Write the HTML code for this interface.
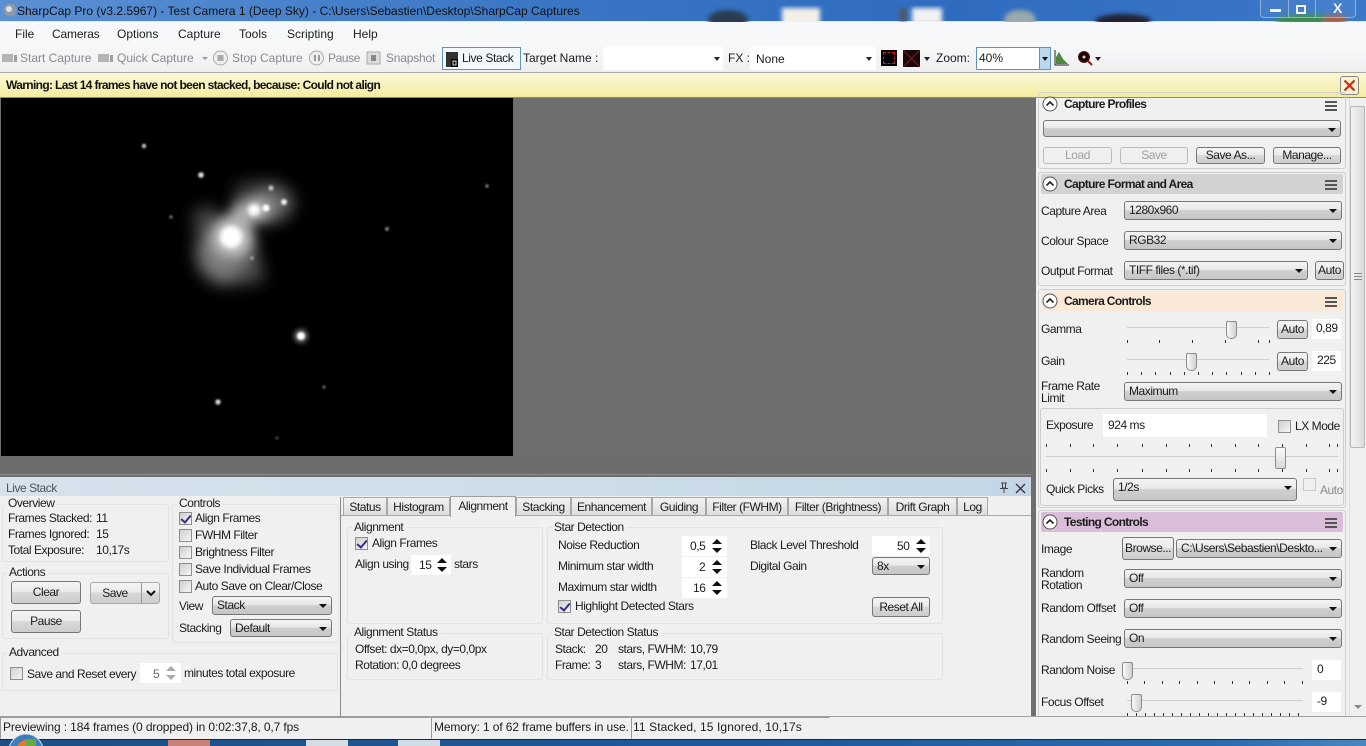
<!DOCTYPE html>
<html><head><meta charset="utf-8"><style>
html,body{margin:0;padding:0;width:1366px;height:746px;overflow:hidden;background:#f0f0f0}
#r{position:absolute;left:0;top:0;width:1366px;height:746px;overflow:hidden;font:12px "Liberation Sans",sans-serif;color:#1c1c1c;letter-spacing:-.45px}
#r div{position:absolute;box-sizing:border-box}
.t{white-space:nowrap;line-height:14px;height:14px}
#r .n{letter-spacing:0}
.g{color:#8a8a8a}
.b{font-weight:bold;letter-spacing:-.65px}
.c{border:1px solid #777;border-radius:3px;background:linear-gradient(#f4f4f4,#e8e8e8 45%,#cfcfcf 50%,#c6c6c6);white-space:nowrap;line-height:16px;padding-left:4px}
.c:after{content:"";position:absolute;right:4px;top:7px;border:4px solid transparent;border-top:4px solid #111;border-bottom:0}
.btn{border:1px solid #777;border-radius:3px;background:linear-gradient(#f4f4f4,#ececec 45%,#d8d8d8 50%,#cdcdcd);text-align:center;white-space:nowrap}
.dis{border-color:#bbb;background:#efefef;color:#a0a0a0}
.f{background:#fff;white-space:nowrap}
.gb{border:1px solid #e2e2e2;border-radius:3px}
.lb{background:#f0f0f0;padding:0 3px 0 2px}
.cb{width:13px;height:13px;border:1px solid #8e8e8e;background:linear-gradient(135deg,#cfcfcf,#f6f6f6)}
.cb.on:after{content:"";position:absolute;left:3px;top:0;width:4px;height:8px;border:solid #30308a;border-width:0 2px 2px 0;transform:rotate(40deg)}
.h{height:20px;border-radius:2px}
.sp{width:10px;height:14px}
.sp:before{content:"";position:absolute;left:0;top:0;border:5px solid transparent;border-bottom:5px solid #111;border-top:0}
.sp:after{content:"";position:absolute;left:0;bottom:0;border:5px solid transparent;border-top:5px solid #111;border-bottom:0}
.sp.lt:before{border-bottom-color:#aaa}.sp.lt:after{border-top-color:#aaa}
.tr{height:2px;background:#cfcfcf;border-bottom:1px solid #eee}
.th{width:11px;height:18px;border:1px solid #8c8c8c;border-radius:2px 2px 5px 5px;background:linear-gradient(90deg,#fafafa,#d0d0d0)}
.tk{width:1px;height:3px;background:#333}
.tab{height:19px;top:497px;border:1px solid #a8a8a8;border-bottom:0;background:linear-gradient(#f2f2f2,#dcdcdc);text-align:center;line-height:18px;white-space:nowrap}
#r .sb{height:22px;top:717px;border:1px solid #9a9a9a;border-right-color:#eee;border-bottom-color:#eee;line-height:18px;white-space:nowrap;padding-left:2px;letter-spacing:-.12px}
svg{position:absolute}
</style></head><body><div id="r">

<!-- title bar -->
<div style="left:0;top:0;width:1366px;height:22px;background:linear-gradient(90deg,#5b90d4,#3a76c4 40%,#2f6cc0 70%,#3b78c8);border-bottom:1px solid #dfe9f5"></div>
<svg style="left:0;top:0" width="1366" height="22"><defs><filter id="bl"><feGaussianBlur stdDeviation="2.5"/></filter></defs>
<g filter="url(#bl)"><ellipse cx="728" cy="20" rx="20" ry="10" fill="#2a3a50"/><rect x="782" y="8" width="38" height="18" fill="#f4f0e8"/><rect x="900" y="8" width="6" height="14" fill="#555"/><rect x="912" y="8" width="30" height="16" fill="#f2f2f2"/><ellipse cx="1020" cy="20" rx="16" ry="10" fill="#9aa"/><ellipse cx="1123" cy="21" rx="28" ry="7" fill="#223"/><ellipse cx="1305" cy="20" rx="30" ry="6" fill="#3a8a50"/><ellipse cx="1335" cy="20" rx="12" ry="5" fill="#a86040"/></g></svg>
<div style="left:1260px;top:-2px;width:96px;height:20px;border:1px solid #8fb0dc;border-radius:0 0 4px 4px;background:rgba(255,255,255,.06)"></div>
<div style="left:1288px;top:0;width:1px;height:18px;background:#8fb0dc"></div>
<div style="left:1315px;top:0;width:1px;height:18px;background:#8fb0dc"></div>
<div style="left:1270px;top:9px;width:11px;height:3px;background:#f2f2f2"></div>
<div style="left:1296px;top:5px;width:10px;height:9px;border:2px solid #f2f2f2"></div>
<div class="t n" style="left:1333px;top:1px;color:#f4f4f4;font-weight:bold;font-size:14px">X</div>
<svg style="left:3px;top:3px" width="14" height="14"><circle cx="7" cy="7" r="6.5" fill="#8a9aa8"/><circle cx="6" cy="6" r="3" fill="#dde"/></svg>
<div class="t n" style="left:17px;top:4px;color:#111">SharpCap Pro (v3.2.5967) - Test Camera 1 (Deep Sky) - C:\Users\Sebastien\Desktop\SharpCap Captures</div>

<!-- menu -->
<div style="left:0;top:22px;width:1366px;height:24px;background:#f7f8f9"></div>
<div class="t n" style="left:15px;top:27px">File</div>
<div class="t" style="left:52px;top:27px;letter-spacing:-.15px">Cameras</div>
<div class="t n" style="left:117px;top:27px">Options</div>
<div class="t n" style="left:178px;top:27px">Capture</div>
<div class="t n" style="left:239px;top:27px">Tools</div>
<div class="t n" style="left:287px;top:27px">Scripting</div>
<div class="t n" style="left:353px;top:27px">Help</div>

<!-- toolbar -->
<div style="left:0;top:46px;width:1366px;height:26px;background:linear-gradient(#f7f8f9,#efefef)"></div>
<svg style="left:2px;top:53px" width="16" height="10"><rect y="1" width="11" height="8" fill="#b4b4b4"/><rect x="12" y="2" width="3" height="7" fill="#a0a0a0"/></svg>
<div class="t g n" style="left:20px;top:51px">Start Capture</div>
<svg style="left:98px;top:53px" width="16" height="10"><rect y="1" width="11" height="8" fill="#b4b4b4"/><rect x="12" y="2" width="3" height="7" fill="#a0a0a0"/></svg>
<div class="t g n" style="left:117px;top:51px">Quick Capture</div>
<div style="left:202px;top:57px;border:3px solid transparent;border-top:3px solid #999"></div>
<svg style="left:212px;top:50px" width="18" height="16"><circle cx="8.500" cy="8" r="7" fill="#eee" stroke="#aaa"/><rect x="5.500" y="5" width="6" height="6" fill="#aaa"/></svg>
<div class="t g n" style="left:232px;top:51px">Stop Capture</div>
<svg style="left:308px;top:50px" width="18" height="16"><circle cx="8.500" cy="8" r="7" fill="#eee" stroke="#aaa"/><rect x="6" y="5" width="2" height="6" fill="#999"/><rect x="10" y="5" width="2" height="6" fill="#999"/></svg>
<div class="t g" style="left:328px;top:51px;letter-spacing:-.4px">Pause</div>
<svg style="left:366px;top:51px" width="16" height="14"><rect x="1" y="1" width="13" height="12" fill="#ddd" stroke="#aaa"/><rect x="5" y="4" width="5" height="6" fill="#888"/></svg>
<div class="t g" style="left:386px;top:51px;letter-spacing:-.2px">Snapshot</div>
<div style="left:442px;top:47px;width:79px;height:23px;border:1px solid #5d94b8;background:#f3f8fc"></div>
<svg style="left:445px;top:52px" width="14" height="15"><rect x="1" y="0" width="12" height="15" fill="#333"/><rect x="6" y="7" width="7" height="8" fill="#000"/><rect x="8" y="9" width="3" height="4" fill="none" stroke="#ddd"/></svg>
<div class="t" style="left:462px;top:51px;letter-spacing:-.4px">Live Stack</div>
<div class="t n" style="left:523px;top:51px">Target Name :</div>
<div style="left:603px;top:47px;width:120px;height:23px;background:#fff"></div>
<div style="left:714px;top:57px;border:3px solid transparent;border-top:4px solid #222"></div>
<div class="t n" style="left:728px;top:51px">FX :</div>
<div style="left:750px;top:47px;width:126px;height:23px;background:#fff"></div>
<div class="t n" style="left:756px;top:52px">None</div>
<div style="left:866px;top:57px;border:3px solid transparent;border-top:4px solid #222"></div>
<div style="left:881px;top:50px;width:16px;height:16px;background:#000"></div>
<div style="left:883px;top:52px;width:12px;height:12px;border:1px dashed #d02020"></div>
<svg style="left:903px;top:50px" width="17" height="17"><rect width="17" height="17" fill="#1a0808"/><path d="M0 0L17 17M17 0L0 17" stroke="#8a1818" stroke-width="1"/></svg>
<div style="left:924px;top:57px;border:3px solid transparent;border-top:4px solid #222"></div>
<div class="t n" style="left:936px;top:51px">Zoom:</div>
<div class="n" style="left:976px;top:47px;width:63px;height:23px;background:#fff;border:1px solid #5d94b8;border-right:0;padding:3px 0 0 2px;white-space:nowrap;line-height:14px">40%</div>
<div style="left:1039px;top:47px;width:12px;height:23px;background:#bcd8f0;border:1px solid #5d94b8"></div>
<div style="left:1042px;top:57px;border:3px solid transparent;border-top:4px solid #111"></div>
<svg style="left:1054px;top:50px" width="16" height="16"><path d="M1 0V15H15" fill="none" stroke="#222"/><path d="M2 14V7L5 2L9 9L14 14Z" fill="#4f8a3c"/></svg>
<svg style="left:1077px;top:50px" width="16" height="16"><circle cx="7" cy="7" r="5.500" fill="#1a0505" stroke="#601818"/><circle cx="7" cy="7" r="1.500" fill="#e8d0d0"/><path d="M11 11L15 15" stroke="#901818" stroke-width="2"/></svg>
<div style="left:1095px;top:57px;border:3px solid transparent;border-top:4px solid #222"></div>

<!-- warning -->
<div style="left:0;top:72px;width:1366px;height:26px;background:linear-gradient(#fbf8d8,#f4eca0);border-top:1px solid #a8a8a8;border-bottom:1px solid #8a8a8a"></div>
<div class="t b" style="left:6px;top:78px;color:#111">Warning: Last 14 frames have not been stacked, because: Could not align</div>
<div style="left:1340px;top:76px;width:19px;height:19px;border:1px solid #888;border-radius:3px;background:#f8f0d0"></div>
<svg style="left:1343px;top:79px" width="13" height="13"><path d="M1.500 1.500L11.500 11.500M11.500 1.500L1.500 11.500" stroke="#d02810" stroke-width="2.200"/></svg>

<!-- main view -->
<div style="left:0;top:98px;width:1036px;height:379px;background:#6e6e6e"></div>
<div style="left:1031px;top:98px;width:5px;height:618px;background:#6e6e6e"></div>
<div style="left:0;top:456px;width:1031px;height:19px;background:#6c6c6c;border-bottom:1px solid #8c8c8c"></div>
<svg style="left:1px;top:98px" width="512" height="358" viewBox="1 98 512 358"><defs>
<filter id="a" x="-100%" y="-100%" width="300%" height="300%"><feGaussianBlur stdDeviation="8"/></filter><filter id="b" x="-100%" y="-100%" width="300%" height="300%"><feGaussianBlur stdDeviation="6"/></filter><filter id="c" x="-100%" y="-100%" width="300%" height="300%"><feGaussianBlur stdDeviation="2.500"/></filter><filter id="d" x="-100%" y="-100%" width="300%" height="300%"><feGaussianBlur stdDeviation="1"/></filter></defs>
<rect x="1" y="98" width="512" height="358" fill="#000"/>
<g filter="url(#a)"><ellipse cx="226" cy="252" rx="30" ry="32" fill="#7c7c7c"/><ellipse cx="265" cy="203" rx="28" ry="20" fill="#6c6c6c"/><ellipse cx="207" cy="221" rx="14" ry="14" fill="#484848"/><ellipse cx="250" cy="272" rx="14" ry="12" fill="#505050"/><ellipse cx="248" cy="192" rx="14" ry="10" fill="#3c3c3c"/></g>
<g filter="url(#b)"><ellipse cx="232" cy="237" rx="20" ry="20" fill="#c4c4c4"/><ellipse cx="244" cy="214" rx="14" ry="12" fill="#aaa"/><ellipse cx="258" cy="209" rx="13" ry="11" fill="#b8b8b8"/></g>
<g filter="url(#c)"><circle cx="231" cy="237" r="11" fill="#fff"/><circle cx="254" cy="210" r="6" fill="#fff"/><circle cx="301" cy="336" r="7" fill="#666"/></g>
<g filter="url(#d)" fill="#e8e8e8"><circle cx="266" cy="208" r="3.500" fill="#fff"/><circle cx="284" cy="202" r="3" fill="#eee"/><circle cx="271" cy="188" r="2.500" fill="#ccc"/><circle cx="301" cy="336" r="4" fill="#fff"/><circle cx="144" cy="146" r="2"/><circle cx="201" cy="175" r="2.800"/><circle cx="171" cy="217" r="1.500" fill="#999"/><circle cx="487" cy="186" r="1.500" fill="#aaa"/><circle cx="387" cy="229" r="1.700" fill="#aaa"/><circle cx="218" cy="402" r="2.600"/><circle cx="324" cy="387" r="1.400" fill="#999"/><circle cx="277" cy="438" r="1.200" fill="#888"/><circle cx="252" cy="258" r="1.500" fill="#ccc"/></g>
</svg>

<!-- live stack panel -->
<div style="left:0;top:477px;width:1031px;height:239px;background:#f0f0f0"></div>
<div style="left:0;top:477px;width:1031px;height:19px;background:linear-gradient(90deg,#d6e2ec,#cddde9 50%,#c4d6e5)"></div>
<div class="t" style="left:6px;top:481px;color:#4a5560">Live Stack</div>
<svg style="left:999px;top:482px" width="10" height="12"><path d="M2 1H8M3.500 1V6H6.500V1M1 6.500H9M5 7V11" fill="none" stroke="#444"/></svg>
<svg style="left:1015px;top:483px" width="11" height="11"><path d="M1 1L10 10M10 1L1 10" stroke="#333" stroke-width="1.300"/></svg>

<div class="gb" style="left:2px;top:504px;width:167px;height:58px"></div>
<div class="t lb" style="left:6px;top:496px">Overview</div>
<div class="t" style="left:8px;top:511px">Frames Stacked:</div><div class="t" style="left:96px;top:511px">11</div>
<div class="t" style="left:8px;top:527px">Frames Ignored:</div><div class="t" style="left:96px;top:527px">15</div>
<div class="t" style="left:8px;top:543px">Total Exposure:</div><div class="t" style="left:96px;top:543px">10,17s</div>

<div class="gb" style="left:2px;top:573px;width:167px;height:66px"></div>
<div class="t lb" style="left:7px;top:565px">Actions</div>
<div class="btn" style="left:11px;top:581px;width:70px;height:23px;line-height:21px">Clear</div>
<div class="btn" style="left:90px;top:582px;width:70px;height:22px;line-height:20px;border-color:#aaa;padding-right:20px">Save</div>
<div style="left:141px;top:583px;width:1px;height:20px;background:#999"></div>
<svg style="left:146px;top:590px" width="10" height="7"><path d="M1 1L5 5L9 1" fill="none" stroke="#111" stroke-width="2"/></svg>
<div class="btn" style="left:11px;top:610px;width:70px;height:23px;line-height:21px">Pause</div>

<div class="gb" style="left:172px;top:504px;width:167px;height:139px"></div>
<div class="t lb" style="left:177px;top:496px">Controls</div>
<div class="cb on" style="left:179px;top:512px"></div><div class="t" style="left:195px;top:511px">Align Frames</div>
<div class="cb" style="left:179px;top:529px"></div><div class="t" style="left:195px;top:528px">FWHM Filter</div>
<div class="cb" style="left:179px;top:546px"></div><div class="t" style="left:195px;top:545px">Brightness Filter</div>
<div class="cb" style="left:179px;top:563px"></div><div class="t" style="left:195px;top:562px">Save Individual Frames</div>
<div class="cb" style="left:179px;top:580px"></div><div class="t" style="left:195px;top:579px">Auto Save on Clear/Close</div>
<div class="t" style="left:179px;top:599px">View</div>
<div class="c" style="left:212px;top:596px;width:120px;height:19px">Stack</div>
<div class="t" style="left:179px;top:621px">Stacking</div>
<div class="c" style="left:230px;top:619px;width:102px;height:18px">Default</div>

<div class="gb" style="left:2px;top:653px;width:336px;height:38px"></div>
<div class="t lb" style="left:7px;top:645px">Advanced</div>
<div class="cb" style="left:10px;top:667px"></div>
<div class="t" style="left:27px;top:667px">Save and Reset every</div>
<div class="f" style="left:140px;top:663px;width:41px;height:20px"></div>
<div class="t g" style="left:153px;top:667px;color:#666">5</div>
<div class="sp lt" style="left:166px;top:666px"></div>
<div class="t" style="left:184px;top:666px">minutes total exposure</div>

<div style="left:340px;top:497px;width:1px;height:219px;background:#8a8a8a"></div>
<!-- tabs -->
<div class="tab" style="left:343px;width:44px">Status</div>
<div class="tab" style="left:387px;width:63px">Histogram</div>
<div class="tab" style="left:516px;width:55px">Stacking</div>
<div class="tab" style="left:571px;width:81px">Enhancement</div>
<div class="tab" style="left:652px;width:54px">Guiding</div>
<div class="tab" style="left:706px;width:82px">Filter (FWHM)</div>
<div class="tab" style="left:788px;width:100px">Filter (Brightness)</div>
<div class="tab" style="left:888px;width:69px">Drift Graph</div>
<div class="tab" style="left:957px;width:31px">Log</div>
<div style="left:341px;top:515px;width:690px;height:1px;background:#a8a8a8"></div>
<div class="tab" style="left:450px;top:496px;width:66px;height:21px;background:#f0f0f0;border-color:#a0a0a0;line-height:18px">Alignment</div>

<div class="gb" style="left:347px;top:527px;width:196px;height:97px"></div>
<div class="t lb" style="left:352px;top:520px">Alignment</div>
<div class="cb on" style="left:355px;top:537px"></div><div class="t" style="left:372px;top:536px">Align Frames</div>
<div class="t" style="left:355px;top:557px">Align using</div>
<div class="f" style="left:411px;top:555px;width:40px;height:20px"></div>
<div class="t" style="left:419px;top:558px">15</div><div class="sp" style="left:437px;top:558px"></div>
<div class="t" style="left:454px;top:557px">stars</div>

<div class="gb" style="left:547px;top:527px;width:396px;height:97px"></div>
<div class="t lb" style="left:552px;top:520px">Star Detection</div>
<div class="t" style="left:558px;top:538px">Noise Reduction</div>
<div class="t" style="left:558px;top:559px">Minimum star width</div>
<div class="t" style="left:558px;top:580px">Maximum star width</div>
<div class="f" style="left:682px;top:536px;width:45px;height:20px"></div><div class="t" style="left:690px;top:539px">0,5</div><div class="sp" style="left:712px;top:539px"></div>
<div class="f" style="left:682px;top:557px;width:45px;height:20px"></div><div class="t" style="left:699px;top:560px">2</div><div class="sp" style="left:712px;top:560px"></div>
<div class="f" style="left:682px;top:578px;width:45px;height:20px"></div><div class="t" style="left:693px;top:581px">16</div><div class="sp" style="left:712px;top:581px"></div>
<div class="cb on" style="left:558px;top:600px"></div><div class="t" style="left:575px;top:599px">Highlight Detected Stars</div>
<div class="t" style="left:750px;top:538px">Black Level Threshold</div>
<div class="t" style="left:750px;top:559px">Digital Gain</div>
<div class="f" style="left:872px;top:536px;width:58px;height:20px"></div><div class="t" style="left:897px;top:539px">50</div><div class="sp" style="left:916px;top:539px"></div>
<div class="c" style="left:872px;top:557px;width:58px;height:18px">8x</div>
<div class="btn" style="left:872px;top:597px;width:58px;height:20px;line-height:18px">Reset All</div>

<div class="gb" style="left:347px;top:633px;width:196px;height:47px"></div>
<div class="t lb" style="left:352px;top:625px">Alignment Status</div>
<div class="t" style="left:355px;top:642px">Offset: dx=0,0px, dy=0,0px</div>
<div class="t" style="left:355px;top:658px">Rotation: 0,0 degrees</div>
<div class="gb" style="left:547px;top:633px;width:396px;height:47px"></div>
<div class="t lb" style="left:552px;top:625px">Star Detection Status</div>
<div class="t" style="left:555px;top:642px">Stack:</div><div class="t" style="left:595px;top:642px">20</div><div class="t" style="left:618px;top:642px">stars, FWHM:</div><div class="t" style="left:690px;top:642px">10,79</div>
<div class="t" style="left:555px;top:658px">Frame:</div><div class="t" style="left:595px;top:658px">3</div><div class="t" style="left:618px;top:658px">stars, FWHM:</div><div class="t" style="left:690px;top:658px">17,01</div>

<!-- right panel -->
<div style="left:1036px;top:98px;width:313px;height:618px;background:#f0f0f0"></div>
<div class="gb" style="left:1038px;top:92px;width:308px;height:77px;border-color:#cfcfcf"></div>
<svg style="left:1042px;top:96px" width="16" height="16"><circle cx="8" cy="8" r="7" fill="#fff" stroke="#555"/><path d="M4.500 9.500L8 6L11.500 9.500" fill="none" stroke="#222" stroke-width="1.600"/></svg>
<div class="t b" style="left:1064px;top:97px">Capture Profiles</div>
<div style="left:1325px;top:101px;width:12px;height:10px;border-top:2px solid #555;border-bottom:2px solid #555"></div><div style="left:1325px;top:105px;width:12px;height:2px;background:#555"></div>
<div class="c" style="left:1043px;top:120px;width:298px;height:17px"></div>
<div class="btn dis" style="left:1043px;top:147px;width:69px;height:17px;line-height:15px">Load</div>
<div class="btn dis" style="left:1120px;top:147px;width:68px;height:17px;line-height:15px">Save</div>
<div class="btn" style="left:1196px;top:147px;width:69px;height:17px;line-height:15px">Save As...</div>
<div class="btn" style="left:1273px;top:147px;width:68px;height:17px;line-height:15px">Manage...</div>

<div class="gb" style="left:1038px;top:172px;width:308px;height:114px;border-color:#cfcfcf"></div>
<div class="h" style="left:1041px;top:174px;width:302px;background:#d2d2d2"></div>
<svg style="left:1042px;top:176px" width="16" height="16"><circle cx="8" cy="8" r="7" fill="#fff" stroke="#555"/><path d="M4.500 9.500L8 6L11.500 9.500" fill="none" stroke="#222" stroke-width="1.600"/></svg>
<div class="t b" style="left:1064px;top:177px">Capture Format and Area</div>
<div style="left:1325px;top:180px;width:12px;height:10px;border-top:2px solid #555;border-bottom:2px solid #555"></div><div style="left:1325px;top:184px;width:12px;height:2px;background:#555"></div>
<div class="t" style="left:1041px;top:204px">Capture Area</div><div class="c" style="left:1124px;top:201px;width:218px;height:19px">1280x960</div>
<div class="t" style="left:1041px;top:234px">Colour Space</div><div class="c" style="left:1124px;top:231px;width:218px;height:19px">RGB32</div>
<div class="t" style="left:1041px;top:264px">Output Format</div><div class="c" style="left:1124px;top:261px;width:184px;height:19px">TIFF files (*.tif)</div>
<div class="btn" style="left:1315px;top:261px;width:29px;height:19px;line-height:17px">Auto</div>

<div class="gb" style="left:1038px;top:289px;width:308px;height:219px;border-color:#cfcfcf"></div>
<div class="h" style="left:1041px;top:291px;width:302px;background:#fbe9d8"></div>
<svg style="left:1042px;top:293px" width="16" height="16"><circle cx="8" cy="8" r="7" fill="#fff" stroke="#555"/><path d="M4.500 9.500L8 6L11.500 9.500" fill="none" stroke="#222" stroke-width="1.600"/></svg>
<div class="t b" style="left:1064px;top:294px">Camera Controls</div>
<div style="left:1325px;top:297px;width:12px;height:10px;border-top:2px solid #555;border-bottom:2px solid #555"></div><div style="left:1325px;top:301px;width:12px;height:2px;background:#555"></div>

<div class="t" style="left:1041px;top:322px">Gamma</div>
<div class="tr" style="left:1127px;top:327px;width:142px"></div>
<div class="tk" style="left:1127px;top:340px"></div><div class="tk" style="left:1159px;top:340px"></div><div class="tk" style="left:1192px;top:340px"></div><div class="tk" style="left:1225px;top:340px"></div><div class="tk" style="left:1258px;top:340px"></div><div class="tk" style="left:1269px;top:340px"></div>
<div class="th" style="left:1226px;top:321px"></div>
<div class="btn" style="left:1277px;top:320px;width:31px;height:19px;line-height:17px">Auto</div>
<div class="f" style="left:1312px;top:319px;width:29px;height:20px;line-height:19px;padding-left:4px">0,89</div>

<div class="t" style="left:1041px;top:354px">Gain</div>
<div class="tr" style="left:1127px;top:359px;width:142px"></div>
<div class="tk" style="left:1127px;top:372px"></div><div class="tk" style="left:1141px;top:372px"></div><div class="tk" style="left:1155px;top:372px"></div><div class="tk" style="left:1170px;top:372px"></div><div class="tk" style="left:1184px;top:372px"></div><div class="tk" style="left:1198px;top:372px"></div><div class="tk" style="left:1212px;top:372px"></div><div class="tk" style="left:1226px;top:372px"></div><div class="tk" style="left:1241px;top:372px"></div><div class="tk" style="left:1255px;top:372px"></div><div class="tk" style="left:1269px;top:372px"></div>
<div class="th" style="left:1186px;top:353px"></div>
<div class="btn" style="left:1277px;top:352px;width:31px;height:19px;line-height:17px">Auto</div>
<div class="f" style="left:1312px;top:351px;width:29px;height:20px;line-height:19px;padding-left:5px">225</div>

<div class="t" style="left:1041px;top:379px">Frame Rate</div><div class="t" style="left:1041px;top:391px">Limit</div>
<div class="c" style="left:1124px;top:382px;width:218px;height:19px">Maximum</div>

<div class="gb" style="left:1040px;top:408px;width:304px;height:98px;border-color:#cdcdcd"></div>
<div class="t" style="left:1046px;top:418px">Exposure</div>
<div class="f" style="left:1103px;top:414px;width:164px;height:23px;line-height:23px;padding-left:5px">924 ms</div>
<div class="cb" style="left:1278px;top:420px"></div>
<div class="t" style="left:1295px;top:419px">LX Mode</div>
<div class="tr" style="left:1046px;top:456px;width:292px"></div>
<div class="tk" style="left:1046px;top:444px"></div><div class="tk" style="left:1070px;top:444px"></div><div class="tk" style="left:1093px;top:444px"></div><div class="tk" style="left:1117px;top:444px"></div><div class="tk" style="left:1142px;top:444px"></div><div class="tk" style="left:1166px;top:444px"></div><div class="tk" style="left:1189px;top:444px"></div><div class="tk" style="left:1211px;top:444px"></div><div class="tk" style="left:1235px;top:444px"></div><div class="tk" style="left:1258px;top:444px"></div><div class="tk" style="left:1282px;top:444px"></div><div class="tk" style="left:1306px;top:444px"></div><div class="tk" style="left:1329px;top:444px"></div><div class="tk" style="left:1337px;top:444px"></div>
<div class="tk" style="left:1046px;top:469px"></div><div class="tk" style="left:1070px;top:469px"></div><div class="tk" style="left:1093px;top:469px"></div><div class="tk" style="left:1117px;top:469px"></div><div class="tk" style="left:1142px;top:469px"></div><div class="tk" style="left:1166px;top:469px"></div><div class="tk" style="left:1189px;top:469px"></div><div class="tk" style="left:1211px;top:469px"></div><div class="tk" style="left:1235px;top:469px"></div><div class="tk" style="left:1258px;top:469px"></div><div class="tk" style="left:1282px;top:469px"></div><div class="tk" style="left:1306px;top:469px"></div><div class="tk" style="left:1329px;top:469px"></div><div class="tk" style="left:1337px;top:469px"></div>
<div class="th" style="left:1275px;top:447px;height:22px;border-radius:2px;background:linear-gradient(#fafafa,#d8d8d8)"></div>
<div class="t" style="left:1046px;top:482px">Quick Picks</div>
<div class="c" style="left:1113px;top:478px;width:184px;height:23px">1/2s</div>
<div style="left:1303px;top:478px;width:13px;height:13px;border:1px solid #c8c8c8"></div>
<div class="t g" style="left:1320px;top:483px">Auto</div>

<div class="gb" style="left:1038px;top:510px;width:308px;height:210px;border-color:#cfcfcf"></div>
<div class="h" style="left:1041px;top:512px;width:302px;background:#dabdd8"></div>
<svg style="left:1042px;top:514px" width="16" height="16"><circle cx="8" cy="8" r="7" fill="#fff" stroke="#555"/><path d="M4.500 9.500L8 6L11.500 9.500" fill="none" stroke="#222" stroke-width="1.600"/></svg>
<div class="t b" style="left:1064px;top:515px">Testing Controls</div>
<div style="left:1325px;top:518px;width:12px;height:10px;border-top:2px solid #555;border-bottom:2px solid #555"></div><div style="left:1325px;top:522px;width:12px;height:2px;background:#555"></div>

<div class="t" style="left:1041px;top:542px">Image</div>
<div class="btn" style="left:1122px;top:537px;width:52px;height:23px;line-height:21px">Browse...</div>
<div class="c" style="left:1176px;top:539px;width:166px;height:19px">C:\Users\Sebastien\Deskto...</div>
<div class="t" style="left:1041px;top:566px">Random</div><div class="t" style="left:1041px;top:578px">Rotation</div>
<div class="c" style="left:1124px;top:569px;width:218px;height:19px">Off</div>
<div class="t" style="left:1041px;top:601px">Random Offset</div>
<div class="c" style="left:1124px;top:599px;width:218px;height:19px">Off</div>
<div class="t" style="left:1041px;top:632px">Random Seeing</div>
<div class="c" style="left:1124px;top:629px;width:218px;height:19px">On</div>
<div class="t" style="left:1041px;top:663px">Random Noise</div>
<div class="tr" style="left:1127px;top:668px;width:176px"></div>
<div class="tk" style="left:1127px;top:681px"></div><div class="tk" style="left:1144px;top:681px"></div><div class="tk" style="left:1162px;top:681px"></div><div class="tk" style="left:1179px;top:681px"></div><div class="tk" style="left:1197px;top:681px"></div><div class="tk" style="left:1214px;top:681px"></div><div class="tk" style="left:1232px;top:681px"></div><div class="tk" style="left:1249px;top:681px"></div><div class="tk" style="left:1267px;top:681px"></div><div class="tk" style="left:1284px;top:681px"></div><div class="tk" style="left:1302px;top:681px"></div>
<div class="th" style="left:1122px;top:662px"></div>
<div class="f" style="left:1312px;top:660px;width:29px;height:20px;line-height:19px;padding-left:5px">0</div>
<div class="t" style="left:1041px;top:695px">Focus Offset</div>
<div class="tr" style="left:1127px;top:700px;width:176px"></div>
<div style="left:1127px;top:713px;width:176px;height:3px;background:repeating-linear-gradient(90deg,#333 0,#333 1px,transparent 1px,transparent 9px)"></div>
<div class="th" style="left:1131px;top:694px"></div>
<div class="f" style="left:1312px;top:692px;width:29px;height:20px;line-height:19px;padding-left:5px">-9</div>

<!-- scrollbar -->
<div style="left:1349px;top:98px;width:17px;height:618px;background:#efefef;border-left:1px solid #ddd"></div>
<div style="left:1350px;top:106px;width:15px;height:342px;border:1px solid #b8b8b8;border-radius:2px;background:linear-gradient(90deg,#f2f2f2,#dcdcdc)"></div>
<div style="left:1354px;top:273px;width:8px;height:7px;border-top:1px solid #888;border-bottom:1px solid #888"></div>
<div style="left:1354px;top:276px;width:8px;height:1px;background:#888"></div>
<div style="left:1354px;top:705px;border:4px solid transparent;border-top:4px solid #888;border-bottom:0"></div>

<!-- status bar -->
<div style="left:0;top:716px;width:1366px;height:23px;background:#f0f0f0;border-top:1px solid #a0a0a0"></div>
<div class="sb" style="left:0;width:431px">Previewing : 184 frames (0 dropped) in 0:02:37,8, 0,7 fps</div>
<div class="sb" style="left:431px;width:200px">Memory: 1 of 62 frame buffers in use.</div>
<div class="sb" style="left:631px;width:199px;letter-spacing:.1px;padding-left:1px">11 Stacked, 15 Ignored, 10,17s</div>

<!-- taskbar -->
<div style="left:0;top:739px;width:1366px;height:7px;background:linear-gradient(90deg,#1d4f86,#1f5a9c 60%,#2a6cae 90%,#4a86c0);border-top:1px solid #0d2c50"></div>
<svg style="left:8px;top:733px" width="36" height="13"><circle cx="18" cy="18" r="17" fill="#3b7ec0" stroke="#cfe0f0"/><circle cx="18" cy="16" r="9" fill="#e07a30"/><rect x="18" y="6" width="10" height="8" fill="#6ca840"/></svg>
<div style="left:168px;top:740px;width:42px;height:6px;background:#c88078"></div>
<div style="left:306px;top:740px;width:42px;height:6px;background:#d4dce4"></div>
<div style="left:398px;top:740px;width:42px;height:6px;background:#cfdbe6"></div>
</div></body></html>
